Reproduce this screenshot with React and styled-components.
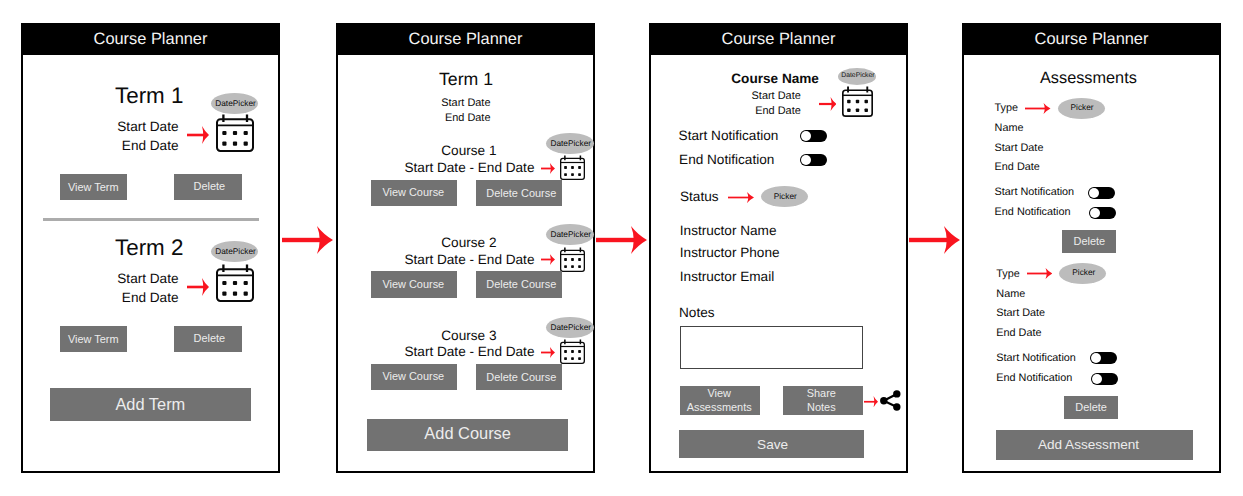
import React from 'react';
import styled, { createGlobalStyle } from 'styled-components';

const GlobalStyle = createGlobalStyle`
  * { box-sizing: border-box; }
  body {
    margin: 0;
    background: #fff;
    color: #0c0c0c;
    font-family: "Liberation Sans", Arial, sans-serif;
    text-rendering: geometricPrecision;
  }
`;

const RED = '#f9141f';
const GREY = '#727272';
const px = (v) => `${v || 0}px`;

const Board = styled.main`
  display: flex;
  align-items: flex-start;
  width: 1243px;
  height: 496px;
  padding: 23px 0 0 21px;
  overflow: hidden;
`;

const Screen = styled.section`
  flex: none;
  width: 259px;
  height: 450px;
  border: 2px solid #000;
  border-top: 0;
  background: #fff;
`;

const TitleBar = styled.header`
  height: 32px;
  background: #000;
  color: #f4f4f4;
  font-size: 16.4px;
  line-height: 33px;
  text-align: center;
`;

const Link = styled.div`
  flex: none;
  display: flex;
  justify-content: center;
  width: ${(p) => px(p.$width)};
  padding: 203px ${(p) => px(p.$right)} 0 0;
`;

const Row = styled.div`
  display: flex;
  align-items: ${(p) => p.$align || 'flex-start'};
  height: ${(p) => (p.$height ? px(p.$height) : 'auto')};
  margin-top: ${(p) => px(p.$top)};
  padding-left: ${(p) => px(p.$left)};
`;

const Stack = styled.div`
  flex: none;
  display: flex;
  flex-direction: column;
  width: ${(p) => (p.$width ? px(p.$width) : 'auto')};
  margin-top: ${(p) => px(p.$top)};
  margin-left: ${(p) => px(p.$left)};
`;

const Text = styled.div`
  flex: none;
  width: ${(p) => (p.$width ? px(p.$width) : 'auto')};
  margin-top: ${(p) => px(p.$top)};
  padding-left: ${(p) => px(p.$left)};
  padding-right: ${(p) => px(p.$right)};
  font-size: ${(p) => px(p.$size || 13.6)};
  font-weight: ${(p) => (p.$bold ? 700 : 400)};
  line-height: ${(p) => px(p.$line || 20)};
  text-align: ${(p) => (p.$end ? 'right' : 'left')};
  white-space: nowrap;
`;

const Button = styled.button`
  flex: none;
  display: flex;
  align-items: center;
  justify-content: center;
  width: ${(p) => px(p.$width)};
  height: ${(p) => px(p.$height)};
  margin: ${(p) => px(p.$top)} 0 0 ${(p) => px(p.$left)};
  padding: 0;
  border: 0;
  background: ${GREY};
  color: #ececec;
  font-family: inherit;
  font-size: ${(p) => px(p.$size || 10.95)};
  line-height: 13.3px;
  white-space: pre-line;
`;

const Label = styled.span`
  margin: ${(p) => px(p.$dy)} 0 0 ${(p) => px(p.$dx)};
`;

const Divider = styled.hr`
  width: 216px;
  height: 3px;
  margin: 18.5px 0 0 20px;
  border: 0;
  background: #acacac;
`;

const Oval = styled.span`
  flex: none;
  display: flex;
  align-items: center;
  justify-content: center;
  width: ${(p) => px(p.$width || 47.5)};
  height: ${(p) => px(p.$height || 21)};
  margin-left: ${(p) => px(p.$left)};
  padding: 0 0 ${(p) => px(p.$lift || 1)} 2px;
  border-radius: 50%;
  background: #bcbcbc;
  font-size: ${(p) => px(p.$size || 8.3)};
  line-height: 10px;
  white-space: nowrap;
`;

const Switch = styled.span`
  flex: none;
  display: flex;
  align-items: center;
  width: 27px;
  height: 12px;
  margin: ${(p) => px(p.$dy)} 0 0 ${(p) => px(p.$dx)};
  padding-left: 1.3px;
  border-radius: 6px;
  background: #000;
`;

const Knob = styled.span`
  width: 10px;
  height: 10px;
  border-radius: 50%;
  background: #fff;
`;

const NotesField = styled.div`
  width: 182.5px;
  height: 43px;
  margin: 2.7px 0 0 29px;
  border: 1px solid #444;
`;

const Icon = styled.svg`
  flex: none;
  display: block;
  margin: ${(p) => px(p.$top)} ${(p) => px(p.$right)} 0 ${(p) => px(p.$left)};
`;

function Arrow({ w, h, t, head, ...rest }) {
  const m = h / 2;
  const x = w - head;
  return (
    <Icon width={w} height={h} viewBox={`0 0 ${w} ${h}`} {...rest}>
      <rect x="0" y={m - t / 2} width={x + head * 0.5} height={t} fill={RED} />
      <path
        d={`M${x} 0 Q${x + head * 0.42} ${m * 0.62} ${w} ${m} Q${x + head * 0.42} ${m * 1.38} ${x} ${h} Q${x + head * 0.34} ${m} ${x} 0Z`}
        fill={RED}
      />
    </Icon>
  );
}

function Calendar({ size, ...rest }) {
  return (
    <Icon width={size} height={size} viewBox="0 0 38 38" {...rest}>
      <rect x="1" y="5.2" width="36" height="31.8" rx="3.4" fill="none" stroke="#0a0a0a" strokeWidth="2" />
      <path d="M1 11.4H37" stroke="#0a0a0a" strokeWidth="1.8" />
      <path d="M7.4 0.6V8M31 0.6V8" stroke="#0a0a0a" strokeWidth="2.3" />
      {[19, 29.7].map((y) =>
        [8.4, 19, 29.7].map((x) => (
          <rect key={`${x}-${y}`} x={x - 2.1} y={y - 2.1} width="4.2" height="4.2" rx="1" fill="#0a0a0a" />
        ))
      )}
    </Icon>
  );
}

function ShareIcon() {
  return (
    <Icon width="21" height="21" viewBox="0 0 21 21" $left={2} $top={4.2}>
      <path d="M16.8 3.9 3.7 10.7 16.8 17" fill="none" stroke="#000" strokeWidth="2.2" />
      <circle cx="3.8" cy="10.7" r="3.7" />
      <circle cx="16.8" cy="3.9" r="3.7" />
      <circle cx="16.8" cy="17" r="3.7" />
    </Icon>
  );
}

function Toggle(props) {
  return (
    <Switch role="switch" aria-checked="false" {...props}>
      <Knob />
    </Switch>
  );
}

function Term({ name, top, pickerTop, gap }) {
  return (
    <>
      <Row $top={top} $left={92}>
        <Stack $width={64}>
          <Text $size={22.4} $line={26}>{name}</Text>
          <Text $line={19} $top={8} $right={0.5} $end>Start Date</Text>
          <Text $line={19} $right={0.5} $end>End Date</Text>
        </Stack>
        <Arrow w={22} h={18} t={2.6} head={7} $left={8} $top={43} />
        <Stack $left={1.8} $top={pickerTop}>
          <Oval>DatePicker</Oval>
          <Calendar size={38} $left={5.2} $top={gap} />
        </Stack>
      </Row>
      <Row $top={18.5} $left={36.5}>
        <Button $width={67.5} $height={26}><Label $dy={2.5}>View Term</Label></Button>
        <Button $width={67.5} $height={26} $left={47.3}><Label $dx={2.5}>Delete</Label></Button>
      </Row>
    </>
  );
}

function Course({ name, top }) {
  return (
    <>
      <Row $top={top} $height={54}>
        <Stack $width={197} $top={17.8}>
          <Text $line={16.5} $left={103.3}>{name}</Text>
          <Text $line={16.5} $left={66.5}>Start Date - End Date</Text>
        </Stack>
        <Arrow w={14} h={11} t={1.8} head={5} $left={6} $right={-9} $top={37.2} />
        <Stack $top={7}>
          <Oval>DatePicker</Oval>
          <Calendar size={25} $left={13.6} $top={1.3} />
        </Stack>
      </Row>
      <Row $left={33.3}>
        <Button $width={86} $height={26.3}><Label $dx={-2}>View Course</Label></Button>
        <Button $width={86} $height={26.3} $left={19}><Label $dx={4} $dy={1}>Delete Course</Label></Button>
      </Row>
    </>
  );
}

function Assessment({ top, left }) {
  const small = { $size: 10.85, $line: 19.2 };
  return (
    <Stack $top={top} $left={left}>
      <Row $align="center" $height={21}>
        <Text {...small} $width={30.5} $top={1.4}>Type</Text>
        <Arrow w={25.5} h={11} t={1.8} head={7} />
        <Oval $left={7} $width={47} $lift={3}>Picker</Oval>
      </Row>
      <Text {...small} $top={0.7}>Name</Text>
      <Text {...small}>Start Date</Text>
      <Text {...small}>End Date</Text>
      <Row $align="center" $top={5.9} $height={19.4}>
        <Text {...small} $width={93.5}>Start Notification</Text>
        <Toggle />
      </Row>
      <Row $align="center" $height={19.4}>
        <Text {...small} $width={93.5} $top={0.9}>End Notification</Text>
        <Toggle $dx={1} $dy={2} />
      </Row>
      <Button $width={54} $height={22.3} $top={8.8} $left={67.3}><Label $dx={1} $dy={1}>Delete</Label></Button>
    </Stack>
  );
}

function Phone({ children }) {
  return (
    <Screen>
      <TitleBar>Course Planner</TitleBar>
      {children}
    </Screen>
  );
}

function NextArrow({ width, right }) {
  return (
    <Link $width={width} $right={right}>
      <Arrow w={51} h={28} t={4.4} head={16} />
    </Link>
  );
}

export default function App() {
  return (
    <>
      <GlobalStyle />
      <Board>
        <Phone>
          <Term name="Term 1" top={28} pickerTop={10} gap={0.3} />
          <Divider />
          <Term name="Term 2" top={14} pickerTop={6} gap={1.7} />
          <Button $width={200.7} $height={33.3} $top={36} $left={27} $size={16.4}>
            <Label $dy={1}>Add Term</Label>
          </Button>
        </Phone>
        <NextArrow width={56} right={1} />
        <Phone>
          <Text $size={17.7} $line={22} $top={13} $left={101}>Term 1</Text>
          <Text $size={10.95} $line={15} $top={5.7} $width={152.5} $end>Start Date</Text>
          <Text $size={10.95} $line={15} $width={152.5} $end>End Date</Text>
          <Course name="Course 1" top={0} />
          <Course name="Course 2" top={11.3} />
          <Course name="Course 3" top={12.3} />
          <Button $width={201.3} $height={31.7} $top={28.7} $left={29} $size={16.4}>
            <Label $dy={-3}>Add Course</Label>
          </Button>
        </Phone>
        <NextArrow width={54} right={1} />
        <Phone>
          <Row $left={80.3} $height={64}>
            <Stack $width={88} $top={15}>
              <Text $line={17} $bold>Course Name</Text>
              <Text $size={10.95} $line={15} $top={2} $right={18.5} $end>Start Date</Text>
              <Text $size={10.95} $line={15} $right={18.5} $end>End Date</Text>
            </Stack>
            <Arrow w={17.5} h={14} t={2.2} head={6} $left={-0.7} $top={42.3} />
            <Stack $left={1.8} $top={13}>
              <Oval $width={38} $height={16.5} $size={6.8}>DatePicker</Oval>
              <Calendar size={31} $left={3.7} $top={1} />
            </Stack>
          </Row>
          <Row $align="center" $top={7} $left={27.6}>
            <Text $width={121.4}>Start Notification</Text>
            <Toggle />
          </Row>
          <Row $align="center" $top={3.6} $left={28.1}>
            <Text $width={120.9}>End Notification</Text>
            <Toggle />
          </Row>
          <Row $align="center" $top={16.4} $left={29} $height={22}>
            <Text $width={48}>Status</Text>
            <Arrow w={26} h={11} t={1.7} head={7} $top={1} />
            <Oval $left={6.5} $lift={2}>Picker</Oval>
          </Row>
          <Text $top={13} $left={28.8}>Instructor Name</Text>
          <Text $top={2} $left={28.8}>Instructor Phone</Text>
          <Text $top={4} $left={28.8}>Instructor Email</Text>
          <Text $top={16.3} $left={28}>Notes</Text>
          <NotesField />
          <Row $top={17} $left={29}>
            <Button $width={80.3} $height={29.3}><Label $dx={-2}>{'View\nAssessments'}</Label></Button>
            <Button $width={80.3} $height={29.3} $left={22.4}><Label $dx={-3}>{'Share\nNotes'}</Label></Button>
            <Arrow w={14} h={11.5} t={1.7} head={4.5} $left={1.3} $top={9.6} />
            <ShareIcon />
          </Row>
          <Button $width={184.4} $height={27.7} $top={14.7} $left={28.4} $size={13.6}>
            <Label $dx={2} $dy={1}>Save</Label>
          </Button>
        </Phone>
        <NextArrow width={54} right={2} />
        <Phone>
          <Text $size={16.3} $top={12.8} $left={76}>Assessments</Text>
          <Assessment top={9.9} left={30.6} />
          <Assessment top={10.7} left={32.3} />
          <Button $width={197} $height={30} $top={11.2} $left={32} $size={13.6}>
            <Label $dx={-12} $dy={-1}>Add Assessment</Label>
          </Button>
        </Phone>
      </Board>
    </>
  );
}
